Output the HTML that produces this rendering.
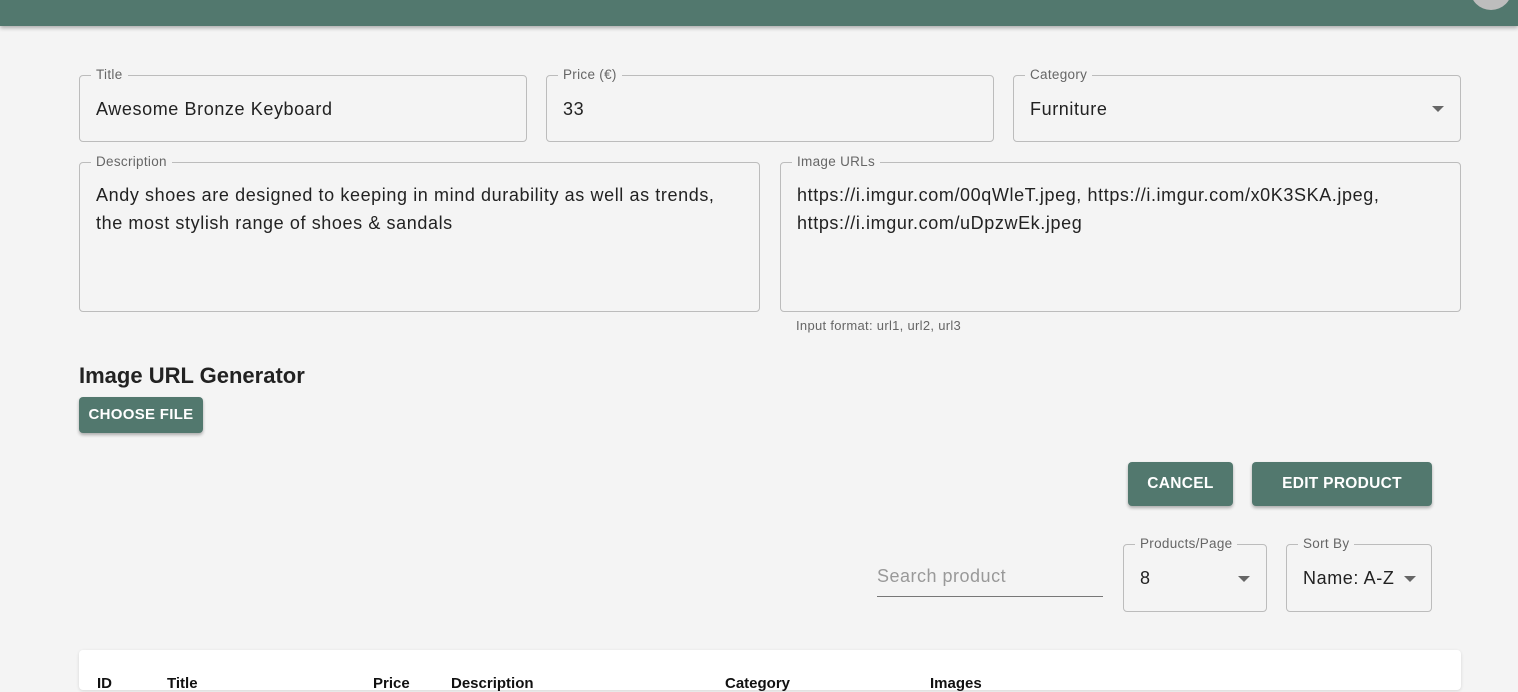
<!DOCTYPE html>
<html><head><meta charset="utf-8"><style>
*{box-sizing:border-box;margin:0;padding:0}
body{width:1518px;height:679px;overflow:hidden;background:#f4f4f4;font-family:"Liberation Sans",Roboto,sans-serif;color:#222;position:relative}
.hdr{position:absolute;left:0;top:0;width:1518px;height:26px;background:#52786e;box-shadow:0 2px 4px rgba(0,0,0,.3)}
.av{position:absolute;left:1470px;top:-32px;width:42px;height:42px;border-radius:50%;background:#bdbdbd}
.f{position:absolute;border:1px solid #bcbcbc;border-radius:4px}
.lb{position:absolute;top:-9px;left:11px;padding:0 5px;background:#f4f4f4;font-size:13.5px;letter-spacing:.3px;color:#666;line-height:16px}
.v{position:absolute;left:16px;font-size:18px;letter-spacing:.6px;color:#222;line-height:28px}
.arr{position:absolute;width:0;height:0;border-left:6px solid transparent;border-right:6px solid transparent;border-top:6px solid #666}
.btn{position:absolute;background:#52786e;color:#fff;font-weight:bold;font-size:15.5px;border-radius:4px;box-shadow:0 2px 3px rgba(0,0,0,.3);text-align:center;letter-spacing:.3px}
.th{position:absolute;top:675px;font-size:15px;font-weight:bold;color:#111}
</style></head><body>
<div class="hdr"></div><div class="av"></div>

<div class="f" style="left:79px;top:75px;width:448px;height:67px"><span class="lb">Title</span><div class="v" style="top:19px">Awesome Bronze Keyboard</div></div>
<div class="f" style="left:546px;top:75px;width:448px;height:67px"><span class="lb">Price (€)</span><div class="v" style="top:19px">33</div></div>
<div class="f" style="left:1013px;top:75px;width:448px;height:67px"><span class="lb">Category</span><div class="v" style="top:19px">Furniture</div><div class="arr" style="left:418px;top:30px"></div></div>

<div class="f" style="left:79px;top:162px;width:681px;height:150px"><span class="lb">Description</span><div class="v" style="top:18px;width:640px">Andy shoes are designed to keeping in mind durability as well as trends, the most stylish range of shoes &amp; sandals</div></div>
<div class="f" style="left:780px;top:162px;width:681px;height:150px"><span class="lb">Image URLs</span><div class="v" style="top:18px;width:650px">https://i.imgur.com/00qWleT.jpeg, https://i.imgur.com/x0K3SKA.jpeg, https://i.imgur.com/uDpzwEk.jpeg</div></div>
<div style="position:absolute;left:796px;top:318px;font-size:13px;letter-spacing:.3px;color:#666">Input format: url1, url2, url3</div>

<div style="position:absolute;left:79px;top:363px;font-size:22px;font-weight:bold;color:#222">Image URL Generator</div>
<div class="btn" style="left:79px;top:397px;width:124px;height:36px;line-height:36px;font-size:15px">CHOOSE FILE</div>

<div class="btn" style="left:1128px;top:462px;width:105px;height:44px;line-height:44px">CANCEL</div>
<div class="btn" style="left:1252px;top:462px;width:180px;height:44px;line-height:44px">EDIT PRODUCT</div>

<div style="position:absolute;left:877px;top:566px;width:226px;height:31px;border-bottom:1px solid #777;font-size:18px;letter-spacing:.5px;color:#999">Search product</div>
<div class="f" style="left:1123px;top:544px;width:144px;height:68px"><span class="lb">Products/Page</span><div class="v" style="top:19px">8</div><div class="arr" style="left:114px;top:31px"></div></div>
<div class="f" style="left:1286px;top:544px;width:146px;height:68px"><span class="lb">Sort By</span><div class="v" style="top:19px">Name: A-Z</div><div class="arr" style="left:117px;top:31px"></div></div>

<div style="position:absolute;left:79px;top:650px;width:1382px;height:40px;background:#fff;border-radius:4px;box-shadow:0 1px 3px rgba(0,0,0,.12)"></div>
<div class="th" style="left:97px">ID</div><div class="th" style="left:167px">Title</div><div class="th" style="left:373px">Price</div><div class="th" style="left:451px">Description</div><div class="th" style="left:725px">Category</div><div class="th" style="left:930px">Images</div>
</body></html>
